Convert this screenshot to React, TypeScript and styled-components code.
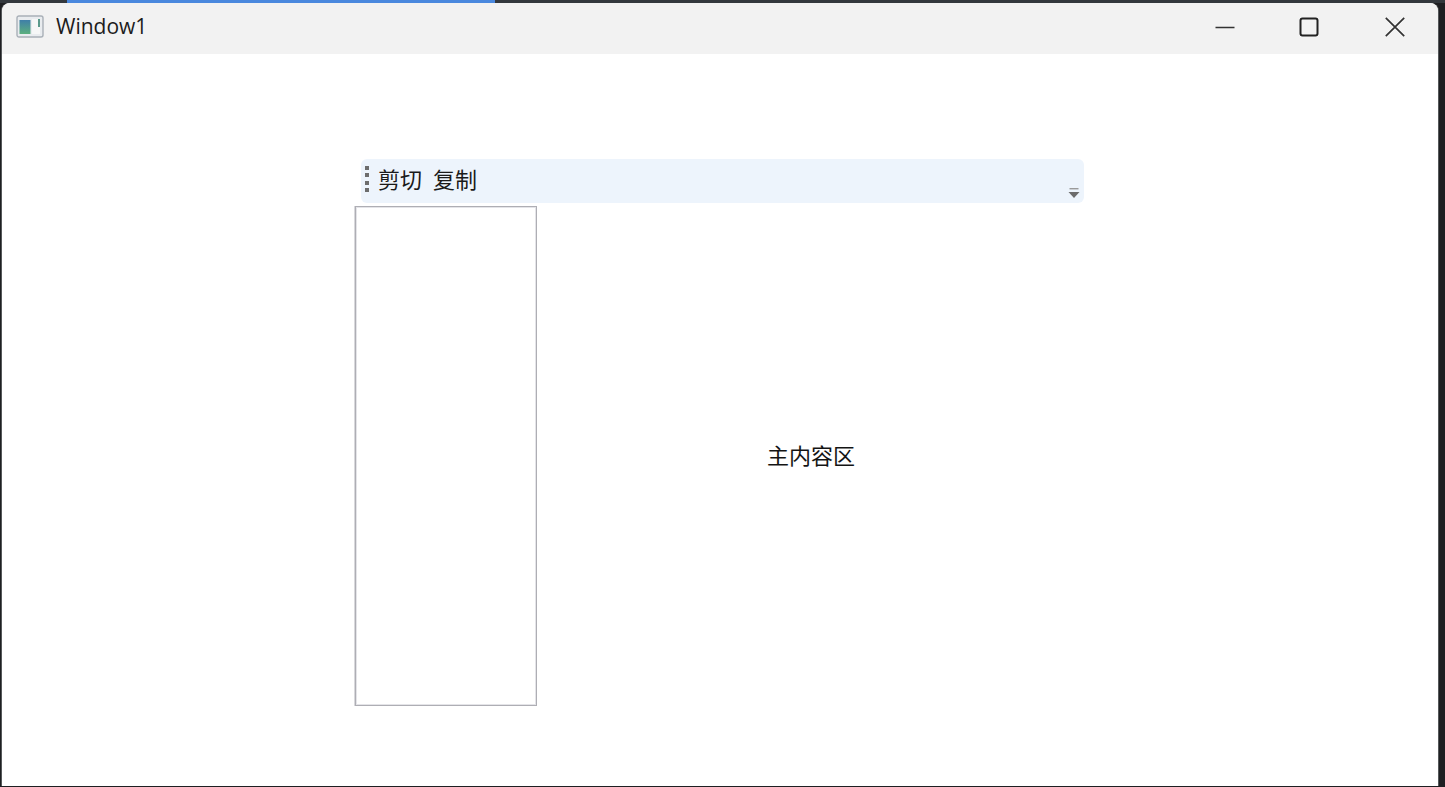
import React from "react";
import styled, { createGlobalStyle } from "styled-components";

const Global = createGlobalStyle`
  html, body { margin: 0; padding: 0; height: 100%; background: #2b2d30; overflow: hidden; }
  #root { height: 100%; }
  * { box-sizing: border-box; }
`;

const Desktop = styled.div`
  width: 1445px;
  height: 787px;
  display: flex;
  flex-direction: column;
  background: #1e1f22;
  font-family: "Noto Sans CJK SC", "Noto Sans", sans-serif;
`;

const TopStrip = styled.div`
  height: 3px;
  flex: none;
  display: flex;
  background: #33383d;
`;

const Progress = styled.div`
  width: 428px;
  margin-left: 67px;
  background: #4a88de;
`;

const WindowFrame = styled.div`
  width: 1436px;
  height: 783px;
  margin-left: 2px;
  display: flex;
  flex-direction: column;
  background: #ffffff;
  border-radius: 8px 8px 0 0;
  overflow: hidden;
  box-shadow: 1px 0 0 #55585a, -1px 0 0 #55585a;
`;

const TitleBar = styled.header`
  height: 51px;
  flex: none;
  display: flex;
  align-items: center;
  background: #f2f2f2;
  padding-left: 14px;
`;

const AppIcon = styled.svg`
  width: 28px;
  height: 23px;
  flex: none;
  margin-top: -4px;
`;

const Title = styled.span`
  margin-left: 12px;
  font-family: "Open Sans", "Noto Sans", sans-serif;
  font-size: 21px;
  color: #1c1c1c;
  margin-top: -6px;
`;

const Controls = styled.div`
  margin-left: auto;
  display: flex;
  align-items: center;
  margin-right: 1px;
  margin-top: -3px;
`;

const ControlButton = styled.div<{ $offset?: number }>`
  width: 84px;
  height: 48px;
  margin-left: ${(p) => p.$offset ?? 0}px;
  display: flex;
  align-items: center;
  justify-content: center;
  color: #222;
`;

const Content = styled.main`
  flex: 1;
  padding: 105px 0 0 353px;
  display: flex;
  flex-direction: column;
  align-items: flex-start;
`;

const Toolbar = styled.div`
  width: 723px;
  height: 44px;
  margin-left: 6px;
  margin-bottom: 3px;
  position: relative;
  display: flex;
  align-items: center;
  gap: 11px;
  padding: 0 0 6px 17px;
  background: #edf4fc;
  border-radius: 6px;
`;

const Grip = styled.div`
  position: absolute;
  left: 4px;
  top: 7px;
  display: grid;
  grid-auto-rows: 4px;
  row-gap: 3.4px;
`;

const GripDot = styled.span`
  width: 4px;
  height: 4px;
  background: #6d6d6d;
`;

const ToolLabel = styled.span`
  font-size: 22px;
  line-height: 30px;
  color: #1a1a1a;
`;

const Overflow = styled.svg`
  position: absolute;
  right: 4px;
  bottom: 4px;
  width: 12px;
  height: 12px;
`;

const Workspace = styled.div`
  width: 729px;
  height: 500px;
  display: flex;
`;

const Sidebar = styled.aside`
  width: 182px;
  flex: none;
  background: #fff;
  border: 1px solid #aeaeb4;
  box-shadow: inset 0 0 0 1px #e4e4e8, -1px 0 0 #d8d8dc;
`;

const MainArea = styled.section`
  flex: 1;
  display: flex;
  align-items: center;
  justify-content: center;
  padding: 0 0 4px 1px;
  font-size: 22px;
  color: #141414;
`;

export default function App() {
  return (
    <Desktop>
      <Global />
      <TopStrip>
        <Progress />
      </TopStrip>
      <WindowFrame>
        <TitleBar>
          <AppIcon viewBox="0 0 28 23">
            <defs>
              <linearGradient id="pane" x1="0" y1="0" x2="0" y2="1">
                <stop offset="0" stopColor="#3f7fa8" />
                <stop offset="1" stopColor="#5cb07e" />
              </linearGradient>
            </defs>
            <rect x="1" y="1" width="26" height="21" rx="2" fill="#e9ecef" stroke="#a9b0b8" strokeWidth="1.4" />
            <rect x="3.5" y="5" width="11" height="14" fill="url(#pane)" />
            <rect x="16" y="4" width="8" height="15" fill="#f6f7f7" />
            <rect x="22" y="4" width="2" height="8" fill="#5b9a8c" />
          </AppIcon>
          <Title>Window1</Title>
          <Controls>
            <ControlButton>
              <svg width="20" height="20" viewBox="0 0 20 20">
                <path d="M0.5 10.5h19" stroke="#333" strokeWidth="1.3" fill="none" />
              </svg>
            </ControlButton>
            <ControlButton>
              <svg width="20" height="20" viewBox="0 0 20 20">
                <rect x="1.5" y="1.5" width="17" height="17" rx="2" stroke="#222" strokeWidth="2" fill="none" />
              </svg>
            </ControlButton>
            <ControlButton $offset={2}>
              <svg width="20" height="20" viewBox="0 0 20 20">
                <path d="M0.8 0.8L19.2 19.2M19.2 0.8L0.8 19.2" stroke="#333" strokeWidth="1.7" fill="none" />
              </svg>
            </ControlButton>
          </Controls>
        </TitleBar>
        <Content>
          <Toolbar>
            <Grip>
              <GripDot />
              <GripDot />
              <GripDot />
              <GripDot />
            </Grip>
            <ToolLabel>剪切</ToolLabel>
            <ToolLabel>复制</ToolLabel>
            <Overflow viewBox="0 0 12 12">
              <rect x="1.5" y="1" width="9" height="1.4" fill="#9a9a9a" />
              <path d="M0.5 5h11L6 11z" fill="#6c6c6c" />
            </Overflow>
          </Toolbar>
          <Workspace>
            <Sidebar />
            <MainArea>主内容区</MainArea>
          </Workspace>
        </Content>
      </WindowFrame>
    </Desktop>
  );
}
